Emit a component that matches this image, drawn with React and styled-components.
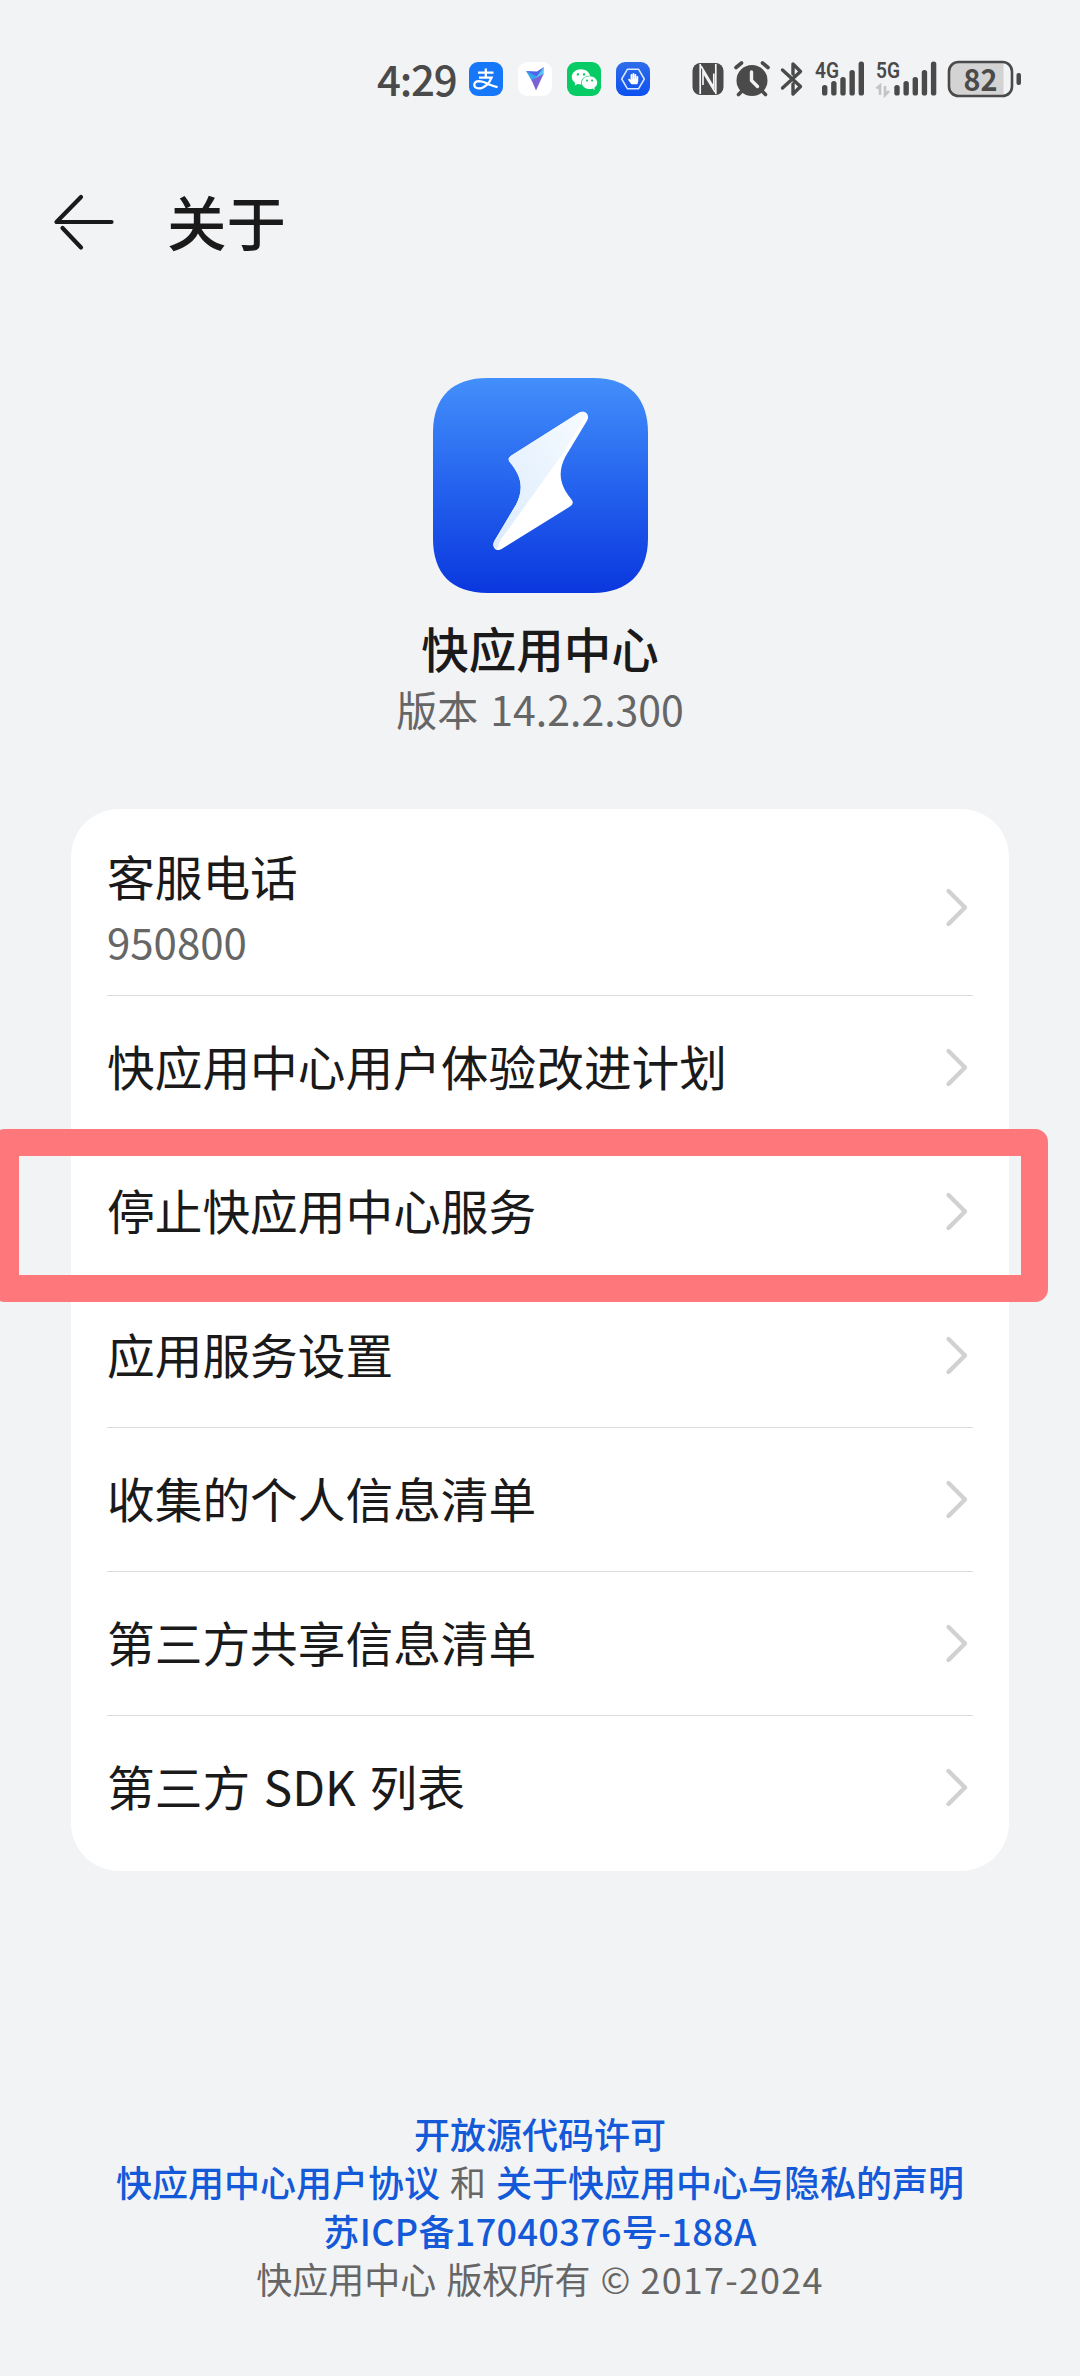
import React from 'react';
import styled, {createGlobalStyle} from 'styled-components';
import {AiFillWechat} from 'react-icons/ai';
import {FaHandPaper} from 'react-icons/fa';

const GlobalStyle = createGlobalStyle`
* {
  box-sizing: border-box;
}
body {
  margin: 0;
  background-color: #f2f3f5;
  font-family: 'Noto Sans CJK SC', 'Noto Sans', sans-serif;
  color: #1a1a1a;
}
`

const Page = styled.div`
display: flex;
flex-direction: column;
align-items: center;
width: 1080px;
height: 2376px;
overflow: hidden;
background-color: #f2f3f5;
`

const StatusBar = styled.div`
display: flex;
align-items: center;
align-self: stretch;
height: 158px;
padding-left: 377px;
color: #4a4a4a;
`

const Clock = styled.span`
width: 92px;
margin-top: -3px;
font-size: 42px;
font-weight: 500;
line-height: 50px;
letter-spacing: -1.2px;
`

const Badges = styled.div`
display: flex;
gap: 15px;
margin-right: 42px;
`

const Badge = styled.div`
display: flex;
align-items: center;
justify-content: center;
width: 34px;
height: 34px;
border-radius: 9px;
background: ${props => props.$bg};
color: white;
`

const HexBadge = styled.svg`
display: block;
`

const Indicators = styled.div`
display: flex;
align-items: center;
gap: 10px;

svg {
  display: block;
}
`

const TitleBar = styled.div`
display: flex;
align-items: center;
align-self: stretch;
gap: 51px;
height: 128px;
padding-left: 52px;
`

const Title = styled.h1`
margin: -5px 0 0;
font-size: 59.5px;
font-weight: 500;
line-height: 80px;
`

const Logo = styled.svg`
display: block;
flex: none;
margin-top: 92px;
`

const AppName = styled.h2`
margin: 25px 0 0;
font-size: 47.5px;
font-weight: 500;
line-height: 60px;
`

const Version = styled.p`
margin: 0;
font-size: 41px;
line-height: 60px;
word-spacing: 3px;
color: #666666;
`

const Card = styled.div`
flex: none;
width: 938px;
margin-top: 71px;
padding: 12px 36px 11px;
border-radius: 48px;
background-color: white;
`

const Row = styled.div`
position: relative;
display: flex;
align-items: center;
justify-content: space-between;
height: ${props => props.$tall ? 175 : 144}px;
padding-right: 4px;
border-bottom: ${props => props.$last ? 'none' : '1.5px solid #dcdddd'};
`

const RowText = styled.div`
display: flex;
flex-direction: column;
margin-top: ${props => props.$tall ? -2 : -4}px;
`

const RowTitle = styled.span`
font-size: 47.7px;
line-height: 68px;
word-spacing: 3px;
`

const RowNote = styled.span`
font-size: 42px;
line-height: 62px;
color: #666666;
`

// hand-drawn marker frame, runs past the card on both sides
const Marker = styled.div`
position: absolute;
z-index: 1;
top: -11px;
left: -115px;
width: 1056px;
height: 173px;
border: 27px solid #fd777b;
border-radius: 13px;
`

const Footer = styled.footer`
display: flex;
flex-direction: column;
align-items: center;
margin-top: 237.5px;
font-size: 36px;
line-height: 48.6px;
word-spacing: 2px;
color: #666666;
white-space: pre;
`

const FooterLink = styled.a`
font-weight: 500;
letter-spacing: ${props => props.$wide ? '0.35px' : 'normal'};
color: #1359d8;
`

const Years = styled.span`
letter-spacing: 1.2px;
`

const rows = [
  {title: '客服电话', note: '950800'},
  {title: '快应用中心用户体验改进计划'},
  {title: '停止快应用中心服务', marked: true},
  {title: '应用服务设置'},
  {title: '收集的个人信息清单'},
  {title: '第三方共享信息清单'},
  {title: '第三方 SDK 列表'},
]

function Chevron() {
  return (
    <svg width="24" height="42" viewBox="0 0 24 42" fill="none" stroke="#d1d1d1" strokeWidth="4.4" strokeLinecap="round" strokeLinejoin="round">
      <path d="M3.5 4 L20 20.5 L3.5 37"/>
    </svg>
  )
}

function Signal({label, width, barsX, children}) {
  const tops = [24, 20, 16, 9, 0.5]
  return (
    <svg width={width} height="56" viewBox={`0 -10 ${width} 56`}>
      <text x="1" y="17" fontFamily="Roboto" fontWeight="600" fontSize="22" textLength="24" lengthAdjust="spacingAndGlyphs" fill="#4a4a4a">{label}</text>
      {tops.map((top, i) => (
        <rect key={top} x={barsX + i * 9.15} y={top} width="5.4" height={34.5 - top} rx="2.6" fill="#4a4a4a"/>
      ))}
      {children}
    </svg>
  )
}

function Status() {
  return (
    <StatusBar>
      <Clock>4:29</Clock>
      <Badges>
        <Badge $bg="#1677f9">
          <svg width="34" height="34" viewBox="0 0 34 34" fill="none" stroke="white" strokeWidth="2.3">
            <path d="M9 10.6 H24.5 M16.8 6.5 V16"/>
            <path d="M10 15.6 H22.6 C20.5 21 15.5 26.4 9.5 26.4 C3.6 26.2 4 19.4 10 19.2 C15.5 19.2 20 23.4 28.6 25.2"/>
          </svg>
        </Badge>
        <Badge $bg="white">
          <svg width="34" height="34" viewBox="0 0 34 34">
            <path d="M8 9 L20 13.5 L14.5 20 Z" fill="#35a5ee"/>
            <path d="M8 9 L19 9.5 L26 5 L20 15 Z" fill="#4c62e8"/>
            <path d="M26 5 L25.5 13 L15 19 Z" fill="#56c2f3"/>
            <path d="M13.5 18 L25.5 12 L18 28.5 Z" fill="#7d62d6"/>
          </svg>
        </Badge>
        <Badge $bg="#07cc66">
          <AiFillWechat size={29}/>
        </Badge>
        <Badge $bg="linear-gradient(#2f6de8, #0c51f0)">
          <HexBadge width="34" height="34" viewBox="0 0 34 34">
            <path d="M11.5 7.2 H22.5 L28.3 17 L22.5 26.8 H11.5 L5.7 17 Z" fill="none" stroke="#dce8ff" strokeWidth="1.5" strokeLinejoin="round"/>
            <FaHandPaper x="11.5" y="11" size={11.5} color="white"/>
          </HexBadge>
        </Badge>
      </Badges>
      <Indicators>
        <svg width="32" height="34" viewBox="0 0 32 34">
          <rect x="0.5" y="1" width="31" height="32" rx="8" fill="#4a4a4a"/>
          <path d="M8.2 2 V32 M9 4 L21.8 25.5 V11.5 M23.8 2 V32 M23 30 L11 10 V23" fill="none" stroke="#f2f3f5" strokeWidth="1.7"/>
        </svg>
        <svg width="36" height="36" viewBox="0 0 36 36">
          <circle cx="18" cy="19.5" r="15.5" fill="#4a4a4a"/>
          <path d="M2 6.5 L7.5 2 M34 6.5 L28.5 2 M8 30 L4.5 33.5 M28 30 L31.5 33.5" stroke="#4a4a4a" strokeWidth="3.6" strokeLinecap="round"/>
          <path d="M17.5 11 V19.5 L23.5 25.5" fill="none" stroke="#f2f3f5" strokeWidth="3.4" strokeLinecap="round" strokeLinejoin="round"/>
        </svg>
        <svg width="24" height="36" viewBox="0 0 24 36" fill="none" stroke="#4a4a4a" strokeWidth="3.4" strokeLinecap="round" strokeLinejoin="round">
          <path d="M2.5 9 L20.5 25.5 L13 33 V23 M2.5 27 L20.5 10.5 L13 3 V13"/>
        </svg>
        <Signal label="4G" width={51} barsX={8}/>
        <Signal label="5G" width={62} barsX={19.3}>
          <path d="M1.5 27.5 L5 24.5 V34 M10 25 V34 L14 30" fill="none" stroke="#c3c4c5" strokeWidth="2.6"/>
        </Signal>
        <svg width="75" height="58" viewBox="0 -10 75 58">
          <rect x="2" y="2" width="63" height="34" rx="9" fill="#f2f3f5"/>
          <path d="M11 2 H56.5 V36 H11 A9 9 0 0 1 2 27 V11 A9 9 0 0 1 11 2 Z" fill="#d3d3d4"/>
          <rect x="2" y="2" width="63" height="34" rx="9.5" fill="none" stroke="#4a4a4a" strokeWidth="2.6"/>
          <rect x="69.5" y="13" width="4.5" height="12" rx="2" fill="#4a4a4a"/>
          <text x="16.500" y="30.5" fontFamily="Noto Sans CJK SC" fontWeight="700" fontSize="31" textLength="34" lengthAdjust="spacingAndGlyphs" fill="#4a4a4a">82</text>
        </svg>
      </Indicators>
    </StatusBar>
  )
}

function BoltLogo() {
  return (
    <Logo width="215" height="215" viewBox="96 54 645 645">
      <defs>
        <linearGradient id="tile" x1="0" y1="0" x2="0" y2="1">
          <stop offset="0" stopColor="#438ffb"/>
          <stop offset="0.5" stopColor="#2563ee"/>
          <stop offset="1" stopColor="#0a37de"/>
        </linearGradient>
        <linearGradient id="shade" x1="1" y1="0" x2="0" y2="1">
          <stop offset="0" stopColor="#f6fbff"/>
          <stop offset="1" stopColor="#dcebfd"/>
        </linearGradient>
      </defs>
      <path d="M260 54 H577 C690 54 741 120 741 218 V535 C741 640 680 699 577 699 H260 C150 699 96 640 96 535 V218 C96 110 155 54 260 54 Z" fill="url(#tile)"/>
      <path d="M330 287 L536 157 C553 149 568 165 558 182 L493 290 C470 335 475 375 511 418 Q521 430 508 439 L302 567 C285 577 270 560 280 543 L345 434 C368 390 364 350 326 306 Q318 295 330 287 Z" fill="white"/>
      <path d="M330 287 L536 157 C545 153 553 156 557 162 L484 283 L298 541 L288 568 C277 563 275 553 280 543 L345 434 C368 390 364 350 326 306 Q318 295 330 287 Z" fill="url(#shade)"/>
    </Logo>
  )
}

function App() {
  return (
    <Page>
      <GlobalStyle/>
      <Status/>
      <TitleBar>
        <svg width="64" height="60" viewBox="0 0 64 60" fill="none" stroke="#1a1a1a" strokeWidth="4.2" strokeLinecap="round" strokeLinejoin="round">
          <path d="M29 5 L4.5 30 H59.5"/>
          <path d="M10.5 36 L29 55.5"/>
        </svg>
        <Title>关于</Title>
      </TitleBar>
      <BoltLogo/>
      <AppName>快应用中心</AppName>
      <Version>版本 14.2.2.300</Version>
      <Card>
        {rows.map((row, i) => (
          <Row key={row.title} $tall={row.note} $last={i === rows.length - 1}>
            <RowText $tall={row.note}>
              <RowTitle>{row.title}</RowTitle>
              {row.note && <RowNote>{row.note}</RowNote>}
            </RowText>
            <Chevron/>
            {row.marked && <Marker/>}
          </Row>
        ))}
      </Card>
      <Footer>
        <FooterLink>开放源代码许可</FooterLink>
        <span>
          <FooterLink>快应用中心用户协议</FooterLink> 和 <FooterLink>关于快应用中心与隐私的声明</FooterLink>
        </span>
        <FooterLink $wide>苏ICP备17040376号-188A</FooterLink>
        <span>快应用中心 版权所有 © <Years>2017-2024</Years></span>
      </Footer>
    </Page>
  )
}

export default App;
